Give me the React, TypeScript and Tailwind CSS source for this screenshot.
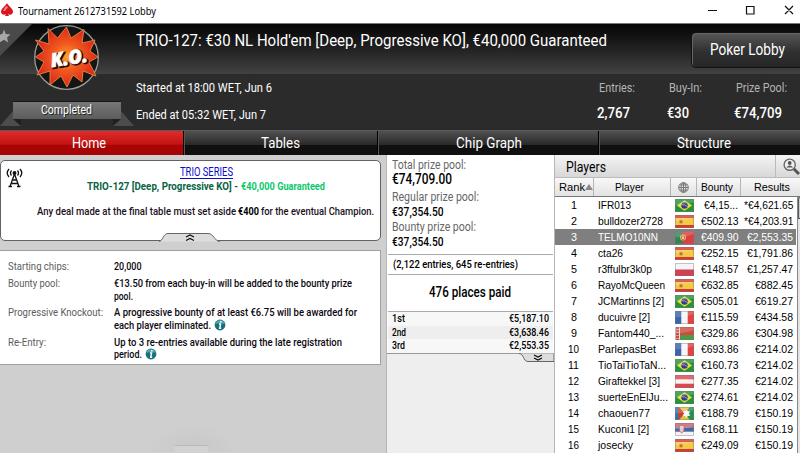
import { useLayoutEffect, useRef } from "react";
import type { ReactNode } from "react";

/** One line of text, condensed horizontally to an exact width. */
function Fit({ w, className = "", children }: { w: number; className?: string; children: ReactNode }) {
  const ref = useRef<HTMLSpanElement>(null);
  useLayoutEffect(() => {
    const el = ref.current;
    if (!el) return;
    el.style.transform = "none";
    el.style.transform = `scaleX(${w / el.getBoundingClientRect().width})`;
  }, [w, children]);
  return (
    <span className={`block shrink-0 whitespace-nowrap ${className}`} style={{ width: w }}>
      <span ref={ref} className="inline-block origin-left whitespace-nowrap">
        {children}
      </span>
    </span>
  );
}

function TitleBar() {
  return (
    <div className="flex h-[23px] items-start bg-white">
      <svg className="mt-[3px] ml-px h-[14px] w-[12px]" viewBox="0 0 12 14">
        <path d="M6 0C7 3 12 5 12 9a3 3 0 0 1-5 2l1 2H4l1-2a3 3 0 0 1-5-2C0 5 5 3 6 0Z" fill="#d9161f" />
        <path d="M5 3 2 8h2l3-4Z" fill="#f58a8a" />
      </svg>
      <Fit w={138} className="ml-[5px] pt-[1px] font-['Noto_Sans'] text-[11px] leading-[19px] text-black">
        Tournament 2612731592 Lobby
      </Fit>
      <svg className="mt-[4px] ml-auto h-[12px] w-[94px]" viewBox="0 0 94 12" fill="none" stroke="#111" strokeWidth="1.2">
        <path d="M2 6.5h9M40.5 2.5h7.5v7.5h-7.5zM79 2l8 8M87 2l-8 8" />
      </svg>
    </div>
  );
}

function Stat({ label, value, lw, vw, className }: { label: string; value: string; lw: number; vw: number; className: string }) {
  return (
    <div className={className}>
      <Fit w={lw} className="ml-[2px] text-[12.5px] leading-[26px] text-[#b5b5b5]">{label}</Fit>
      <Fit w={vw} className="text-[15px] leading-[25px] font-medium text-white">{value}</Fit>
    </div>
  );
}

function Header() {
  return (
    <header className="flex h-[107px] border-t border-[#777] bg-linear-to-b from-[#060606] from-0% via-[#424242] via-[47%] to-[#2b2b2b] to-[47%] text-white">
      <div className="relative h-[106px] w-[136px] shrink-0">
        <svg className="h-[106px] w-[136px]" viewBox="0 24 136 106">
          <defs>
            <radialGradient id="burst">
              <stop offset="0" stopColor="#ffa22b" />
              <stop offset=".45" stopColor="#f05a1d" />
              <stop offset="1" stopColor="#dc261c" />
            </radialGradient>
            <linearGradient id="ribbon" x2="0" y2="1">
              <stop offset="0" stopColor="#777" />
              <stop offset="1" stopColor="#5c5c5c" />
            </linearGradient>
          </defs>
          <path d="M0 24h32L0 56Z" fill="#4a4a4a" />
          <path d="M4 29.5 5.7 34 10.500 34.500 7 37.500 8.200 42.500 4 39.700 -.2 42.500V34.500L2.300 34Z" fill="#a8a8a8" />
          <circle cx="66.500" cy="57.500" r="31.800" fill="#151515" stroke="#9b9b9b" strokeWidth="1.300" />
          <path
            d="M48 28.500 57.500 38 66.500 27 71 38 84 29.500 82 43 95 40 90 51 98 57 89 62 96 76 83 71 82 82 73 75 67 87 61 76 50 85 50 71 37 75 44 62 35.500 57 44 51 35.500 40 49 44Z"
            fill="url(#burst)" stroke="#f0963c" strokeWidth=".8"
          />
          <g transform="rotate(-9 69 58)" fontFamily="Open Sans, sans-serif" fontWeight="800" fontStyle="italic" fontSize="19">
            <text x="51.500" y="65.500" textLength="37" lengthAdjust="spacingAndGlyphs" fill="#2a0907" stroke="#2a0907" strokeWidth="2">K.O.</text>
            <text x="50.500" y="64.500" textLength="37" lengthAdjust="spacingAndGlyphs" fill="#fff" stroke="#fff" strokeWidth=".7">K.O.</text>
          </g>
          <path d="M0 126 13 111v8h8v7ZM134 126 121 111v8h-8v7Z" fill="#4c4c4c" />
          <path d="M13 119h8v7ZM121 119h-8v7Z" fill="#202020" />
          <path d="M13 102h108v17H13Z" fill="url(#ribbon)" />
          <path d="M13 101.500h108" stroke="#161616" />
        </svg>
        <Fit w={51} className="absolute top-[78px] left-[41px] text-[12px] leading-[16px] [text-shadow:1px_1px_#222]">Completed</Fit>
      </div>
      <div className="flex min-w-0 flex-1 flex-col">
        <div className="flex h-[51px] justify-between">
          <Fit w={471} className="pt-[5px] text-[16px] leading-[24px]">
            TRIO-127: €30 NL Hold'em [Deep, Progressive KO], €40,000 Guaranteed
          </Fit>
          <div className="mt-[8px] h-[36px] w-[109px] shrink-0 rounded-l-[5px] border border-r-0 border-[#111] bg-linear-to-b from-[#575757] via-[#303030] via-[55%] to-[#262626] pl-[18px] shadow-[inset_1px_1px_#666]">
            <Fit w={75} className="text-[16px] leading-[34px]">Poker Lobby</Fit>
          </div>
        </div>
        <div className="flex">
          <div className="w-[461px]">
            <Fit w={136} className="text-[12.5px] leading-[25px]">Started at 18:00 WET, Jun 6</Fit>
            <Fit w={130} className="pt-[2px] text-[12.5px] leading-[25px]">Ended at 05:32 WET, Jun 7</Fit>
          </div>
          <Stat label="Entries:" value="2,767" lw={36} vw={33} className="w-[70px]" />
          <Stat label="Buy-In:" value="€30" lw={33} vw={22} className="w-[67px]" />
          <Stat label="Prize Pool:" value="€74,709" lw={51} vw={48} className="w-[66px]" />
        </div>
      </div>
    </header>
  );
}

function Tabs() {
  const dark = "bg-linear-to-b from-[#525252] via-[#292929] via-[58%] to-[#101010] to-[60%] border-l border-l-[#555]";
  return (
    <nav className="flex h-[25px] border-t border-[#5a5a5a] bg-black text-[15.5px] leading-[25px] text-white">
      <div className="flex w-[183px] bg-linear-to-b from-[#df2b2b] via-[#c41212] via-[55%] to-[#a70505] to-[60%] pl-[72px]"><Fit w={34}>Home</Fit></div>
      <div className={`ml-px flex w-[193px] pl-[76px] ${dark}`}><Fit w={39}>Tables</Fit></div>
      <div className={`ml-px flex w-[220px] pl-[77px] ${dark}`}><Fit w={66}>Chip Graph</Fit></div>
      <div className={`ml-px flex flex-1 pl-[77px] ${dark}`}><Fit w={54}>Structure</Fit></div>
    </nav>
  );
}

function Info() {
  return (
    <svg className="-mt-px h-[12px] w-[12px]" viewBox="0 0 12 12">
      <circle cx="6" cy="6" r="5.400" fill="#16717d" />
      <path d="M1.500 5A4.600 4.600 0 0 1 10.500 5Q6 3 1.500 5" fill="#55a8af" />
      <path d="M6.800 2v1.500M5 5h1.600L5.700 9.300h1.500" stroke="#fff" strokeWidth="1.400" fill="none" />
    </svg>
  );
}

function Detail({ label, lw, lines, info, className }: { label: string; lw: number; lines: [string, number][]; info?: boolean; className: string }) {
  return (
    <div className={`flex ${className}`}>
      <div className="w-[105.500px] shrink-0"><Fit w={lw} className="font-normal text-[#5c5c5c]">{label}</Fit></div>
      <div>
        {lines.map(([text, w], i) => (
          <div key={text} className="flex h-[12.600px] items-center gap-[3px]">
            <Fit w={w}>{text}</Fit>
            {info && i === lines.length - 1 && <Info />}
          </div>
        ))}
      </div>
    </div>
  );
}

function HomePanel() {
  return (
    <section className="w-[386px] shrink-0 bg-[#d0cfd0] pt-[5px]">
      <div className="relative h-[81px] w-[381px] rounded-[5px] border border-[#626262] bg-white">
        <svg className="absolute top-[7px] left-[5px] h-[20px] w-[17px]" viewBox="0 0 17 20" fill="none" stroke="#111" strokeWidth="1.300">
          <path d="M3 1Q-.5 5 3 9M5.500 2.500Q3.500 5 5.500 7.500M14 1Q17.500 5 14 9M11.500 2.500Q13.500 5 11.500 7.500M8.500 6 4 18.500M8.500 6 13 18.500M6.500 12h4M5.500 15.500h6M2.500 18.500h3.500M11 18.500h3.500" />
          <circle cx="8.500" cy="5" r="1.300" fill="#111" />
        </svg>
        <div className="flex flex-col items-center pt-[6px] pr-[1px] pl-[32px]">
          <Fit w={53} className="border-b border-[#0b0bd0] text-[12px] leading-[11px] text-[#0b0bd0]">TRIO SERIES</Fit>
          <div className="mt-[1px] flex gap-[3px] text-[11.500px] leading-[13px] font-bold">
            <Fit w={151} className="text-[#086345]">TRIO-127 [Deep, Progressive KO] -</Fit>
            <Fit w={84} className="text-[#0bc86c]">€40,000 Guaranteed</Fit>
          </div>
        </div>
        <div className="mt-[11px] ml-[36px] flex gap-[2px] text-[11.500px] leading-[14px] font-medium text-[#20101c]">
          <Fit w={199}>Any deal made at the final table must set aside</Fit>
          <Fit w={21} className="font-bold text-black">€400</Fit>
          <Fit w={113}>for the eventual Champion.</Fit>
        </div>
        <svg className="absolute top-[72px] left-[158px] h-[9px] w-[62px]" viewBox="0 0 62 9">
          <path d="M0 8.500C4 8 4 .5 9 .5H49C55 .5 55 8 61 8.500" fill="#ddd" stroke="#666" />
          <path d="m27 4 4-2 4 2M27 7.500l4-2 4 2" fill="none" stroke="#111" strokeWidth="1.300" />
        </svg>
      </div>
      <div className="mt-[9px] h-[115px] w-[381px] border border-l-0 border-[#a0a0a0] bg-white pt-[9px] pl-[8px] text-[11.500px] leading-[12.600px] font-medium text-[#0b0710]">
        <Detail className="h-[17px]" label="Starting chips:" lw={61} lines={[["20,000", 27.5]]} />
        <Detail className="h-[29.400px]" label="Bounty pool:" lw={52} lines={[["€13.50 from each buy-in will be added to the bounty prize", 238], ["pool.", 19]]} />
        <Detail className="h-[29.300px]" label="Progressive Knockout:" lw={95} lines={[["A progressive bounty of at least €6.75 will be awarded for", 243], ["each player eliminated.", 97]]} info />
        <Detail className="h-[26px]" label="Re-Entry:" lw={38} lines={[["Up to 3 re-entries available during the late registration", 228], ["period.", 28]]} info />
      </div>
      <div className="mx-auto mt-[58px] h-[29px] w-[90px] bg-[radial-gradient(ellipse_at_50%_100%,#c6c7c7,#d0cfd0_70%)] pt-[22px] pl-[26px]">
        <div className="h-[7px] w-[34px] rounded-t-[2px] border-t border-[#bbb] bg-[#d2d2d2]" />
      </div>
    </section>
  );
}

function PrizePanel() {
  const prizes: [string, string, number][] = [["1st", "€5,187.10", 13], ["2nd", "€3,638.46", 14], ["3rd", "€2,553.35", 13]];
  return (
    <section className="w-[169px] shrink-0 border-x border-l-[#b5b5b5] border-r-[#b5b5b5] bg-[#eee]">
      <div className="h-[199px] border-b border-[#999] bg-white px-px pt-[3px] font-medium text-black">
        <div className="h-[97px] border-b border-[#aaa] pl-[4px] text-[#666]">
          <Fit w={74} className="text-[12.500px] leading-[14px] font-normal">Total prize pool:</Fit>
          <Fit w={60} className="text-[14.500px] leading-[16px] text-black">€74,709.00</Fit>
          <Fit w={87} className="mt-[2px] text-[12.500px] leading-[14px] font-normal">Regular prize pool:</Fit>
          <Fit w={51.5} className="text-[13px] leading-[15px] text-black">€37,354.50</Fit>
          <Fit w={84} className="mt-[1px] text-[12.500px] leading-[14px] font-normal">Bounty prize pool:</Fit>
          <Fit w={51.5} className="text-[13px] leading-[15px] text-black">€37,354.50</Fit>
        </div>
        <div className="h-[20px] border-b border-[#aaa] pl-[5px]"><Fit w={125} className="text-[11px] leading-[19px]">(2,122 entries, 645 re-entries)</Fit></div>
        <div className="h-[37px] border-b border-[#aaa] pl-[41px]"><Fit w={82} className="text-[14px] leading-[35px]">476 places paid</Fit></div>
        {prizes.map(([place, prize, w], i) => (
          <div key={place} className={`flex h-[13.600px] justify-between pr-[4px] pl-[4px] text-[11.500px] leading-[13px] ${i === 1 ? "bg-[#eee]" : "bg-[#f7f7f7]"}`}>
            <Fit w={w}>{place}</Fit>
            <Fit w={40}>{prize}</Fit>
          </div>
        ))}
      </div>
      <svg className="-mt-px ml-auto h-[9px] w-[35px]" viewBox="0 0 35 9">
        <path d="M0 .5C5 .5 4 8.500 9 8.500H35V.5" fill="#ddd" stroke="#666" />
        <path d="m15 2 4 2 4-2M15 5l4 2 4-2" fill="none" stroke="#111" strokeWidth="1.300" />
      </svg>
    </section>
  );
}

type Country = "br" | "es" | "pt" | "pl" | "fr" | "by" | "at" | "re" | "rs";

function Flag({ c }: { c: Country }) {
  return (
    <svg className="h-[13px] w-[19px] shrink-0" viewBox="0 0 19 13">
      {c === "br" && <><path d="M0 0h19v13H0Z" fill="#279238" /><path d="m2 6.500 7.500-5.300L17 6.500l-7.500 5.300Z" fill="#e8dd43" /><circle cx="9.500" cy="6.500" r="3.200" fill="#343d83" /><path d="M6.500 5.500q3 0 6 2.200" stroke="#b9c5dc" fill="none" strokeWidth=".7" /></>}
      {c === "es" && <><path d="M0 0h19v13H0Z" fill="#d63934" /><path d="M0 3h19v7H0Z" fill="#f4c944" /><path d="M4.500 5h3v3.300h-3Z" fill="#bd7040" /></>}
      {c === "pt" && <><path d="M0 0h19v13H0Z" fill="#dc3e42" /><path d="M0 0h7.500v13H0Z" fill="#2f8650" /><circle cx="8" cy="6.500" r="3" fill="#e4ba55" /><path d="M6.500 5h3v2.500L8 9 6.500 7.500Z" fill="#e8c6c2" stroke="#c43e36" strokeWidth=".7" /></>}
      {c === "pl" && <><path d="M0 0h19v7H0Z" fill="#f3f3f3" /><path d="M0 6.500h19V13H0Z" fill="#d33f55" /></>}
      {c === "fr" && <><path d="M0 0h19v13H0Z" fill="#f6f6f6" /><path d="M0 0h6.300v13H0Z" fill="#3a65ae" /><path d="M12.700 0H19v13h-6.300Z" fill="#e24340" /></>}
      {c === "by" && <><path d="M0 0h19v13H0Z" fill="#d3493e" /><path d="M5 8H19v5H5Z" fill="#4b9b45" /><path d="M0 0h5v13H0Z" fill="#f0dcdc" /><path d="M2.500 0v13" stroke="#cf4947" strokeWidth="3" strokeDasharray="2.500 .5" /></>}
      {c === "at" && <><path d="M0 0h19v13H0Z" fill="#da4952" /><path d="M0 4.300h19v4.400H0Z" fill="#f8f3f3" /></>}
      {c === "re" && <><path d="M0 0h19v13H0Z" fill="#2878b0" /><path d="M4 0h11L9.500 6.500Z" fill="#e8c33c" /><path d="M3 0v13l6.500-6.500Z" fill="#d43b2c" /><path d="M15 0h4v13h-4L9.500 6.500Z" fill="#28904f" /><path d="M4 13h11L9.500 6.500Z" fill="#e8c33c" /><path d="m11.500 3 1 1.800h2L13.500 6.500l1 1.900h-2l-1 1.800-1-1.800h-2l1-1.900-1-1.700h2Z" fill="#fff" stroke="#fff" /></>}
      {c === "rs" && <><path d="M0 0h19v13H0Z" fill="#f3f3f3" /><path d="M0 0h19v4.300H0Z" fill="#c7616a" /><path d="M0 4.300h19v4.400H0Z" fill="#4567a3" /><path d="M4.500 2.500h4.500V8L6.700 10 4.500 8Z" fill="#e9c4c4" stroke="#bd4654" strokeWidth=".7" /></>}
      <path d="M0 0h19v3Q10 7 0 6Z" fill="#fff" opacity=".18" />
      <path d="M.5.5h18v12H.5Z" fill="none" stroke="#777" strokeOpacity=".4" />
    </svg>
  );
}

const players: [string, number, Country, string, string][] = [
  ["IFR013", 33, "br", "€4,15...", "*€4,621.65"],
  ["bulldozer2728", 65, "es", "€502.13", "*€4,203.91"],
  ["TELMO10NN", 60, "pt", "€409.90", "€2,553.35"],
  ["cta26", 25, "es", "€252.15", "€1,791.86"],
  ["r3ffulbr3k0p", 54, "pl", "€148.57", "€1,257.47"],
  ["RayoMcQueen", 67, "es", "€632.85", "€882.45"],
  ["JCMartinns [2]", 66, "br", "€505.01", "€619.27"],
  ["ducuivre [2]", 52, "fr", "€115.59", "€434.58"],
  ["Fantom440_...", 66, "by", "€329.86", "€304.98"],
  ["ParlepasBet", 58, "fr", "€693.86", "€214.02"],
  ["TioTaiTioTaN...", 68, "br", "€160.73", "€214.02"],
  ["Giraftekkel [3]", 62, "at", "€277.35", "€214.02"],
  ["suerteEnElJu...", 70, "br", "€274.61", "€214.02"],
  ["chaouen77", 52, "re", "€188.79", "€150.19"],
  ["Kuconi1 [2]", 51, "rs", "€168.11", "€150.19"],
  ["josecky", 35, "es", "€249.09", "€150.19"],
];

function PlayersPanel() {
  const head = "flex h-full items-center border-r border-[#b5b5b5]";
  return (
    <section className="min-w-0 flex-1 bg-white text-black">
      <div className="flex h-[23px] border-b border-[#bbb] bg-linear-to-b from-[#f4f4f4] to-[#d8d8d8]">
        <div className="w-[221px] border-r border-[#bbb] pl-[11px]"><Fit w={40} className="text-[14px] leading-[24px]">Players</Fit></div>
        <svg className="mt-[3px] ml-[7px] h-[17px] w-[17px] shrink-0" viewBox="0 0 17 17">
          <path d="m10.500 10.500 5.500 5.500" stroke="#555" strokeWidth="3" />
          <circle cx="6.700" cy="6.700" r="5.600" fill="#eee" stroke="#666" strokeWidth="1.400" />
          <circle cx="6.700" cy="5" r="1.900" fill="#555" />
          <path d="M3.300 9.500Q6.700 5.500 10.100 9.500Z" fill="#555" />
        </svg>
      </div>
      <div className="flex h-[19px] items-center border-b border-[#777] bg-linear-to-b from-[#f8f8f8] to-[#e2e2e2] font-['Liberation_Sans'] text-[11px]">
        <div className={`${head} w-[39px] pl-[4px]`}>
          <Fit w={26}>Rank</Fit>
          <svg className="h-[6px] w-[8px]" viewBox="0 0 8 6"><path d="M0 6 4 0l4 6Z" fill="#888" /></svg>
        </div>
        <div className={`${head} w-[77px] pl-[21px]`}><Fit w={29}>Player</Fit></div>
        <div className={`${head} w-[26px] justify-center`}>
          <svg className="h-[11px] w-[11px]" viewBox="0 0 11 11" fill="none" stroke="#777">
            <circle cx="5.500" cy="5.500" r="4.800" /><ellipse cx="5.500" cy="5.500" rx="2.300" ry="4.800" /><path d="M.5 5.500h10M1.500 3h8M1.500 8h8M5.500.5v10" />
          </svg>
        </div>
        <div className={`${head} w-[44px] pl-[4px]`}><Fit w={32}>Bounty</Fit></div>
        <div className="pl-[13px]"><Fit w={36}>Results</Fit></div>
      </div>
      <div className="flex">
        <div className="w-[241px] font-['Liberation_Sans'] text-[11px] leading-[16px]">
          {players.map(([name, nw, country, bounty, result], i) => (
            <div key={name} className={`flex h-[16px] items-center ${i === 2 ? "bg-[#7f7f7f] text-white" : ""}`}>
              <Fit w={i > 8 ? 11 : 6} className={i > 8 ? "ml-[13px]" : "mr-[2px] ml-[16px]"}>{i + 1}</Fit>
              <div className="ml-[19px] w-[77px] shrink-0"><Fit w={nw}>{name}</Fit></div>
              <Flag c={country} />
              <div className="flex w-[44px] shrink-0 justify-end"><Fit w={i === 0 ? 34 : 37.5}>{bounty}</Fit></div>
              <div className="flex w-[55px] shrink-0 justify-end"><Fit w={i < 2 ? 49.5 : i < 5 ? 46 : 38}>{result}</Fit></div>
            </div>
          ))}
        </div>
        <div className="ml-px h-[256px] flex-1 border-l border-[#888] bg-[#e4e4e4]">
          <div className="h-[22px] rounded-tl-[4px] border-t border-b border-l border-[#555] bg-[#ccc]" />
        </div>
      </div>
    </section>
  );
}

export default function App() {
  return (
    <div className="h-[453px] w-[800px] overflow-hidden font-[Roboto,'Liberation_Sans',sans-serif]">
      <TitleBar />
      <Header />
      <Tabs />
      <main className="flex h-[298px]">
        <HomePanel />
        <PrizePanel />
        <PlayersPanel />
      </main>
    </div>
  );
}
